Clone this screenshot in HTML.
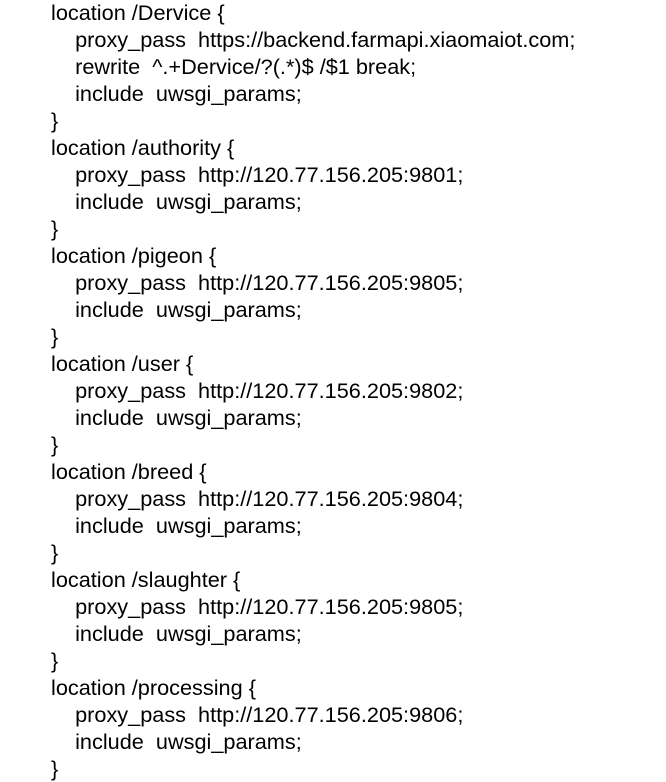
<!DOCTYPE html>
<html><head><meta charset="utf-8"><style>
html,body{margin:0;padding:0;background:#fff;width:666px;height:767px;overflow:hidden}
pre{margin:0;position:absolute;left:51px;top:-1px;font-family:"Liberation Sans","Noto Sans CJK SC",sans-serif;font-size:21.7px;line-height:27px;color:#000;white-space:pre}
</style></head><body><pre>location /Dervice {
    proxy_pass  https://backend.farmapi.xiaomaiot.com;
    rewrite  ^.+Dervice/?(.*)$ /$1 break;
    include  uwsgi_params;
}
location /authority {
    proxy_pass  http://120.77.156.205:9801;
    include  uwsgi_params;
}
location /pigeon {
    proxy_pass  http://120.77.156.205:9805;
    include  uwsgi_params;
}
location /user {
    proxy_pass  http://120.77.156.205:9802;
    include  uwsgi_params;
}
location /breed {
    proxy_pass  http://120.77.156.205:9804;
    include  uwsgi_params;
}
location /slaughter {
    proxy_pass  http://120.77.156.205:9805;
    include  uwsgi_params;
}
location /processing {
    proxy_pass  http://120.77.156.205:9806;
    include  uwsgi_params;
}</pre></body></html>
